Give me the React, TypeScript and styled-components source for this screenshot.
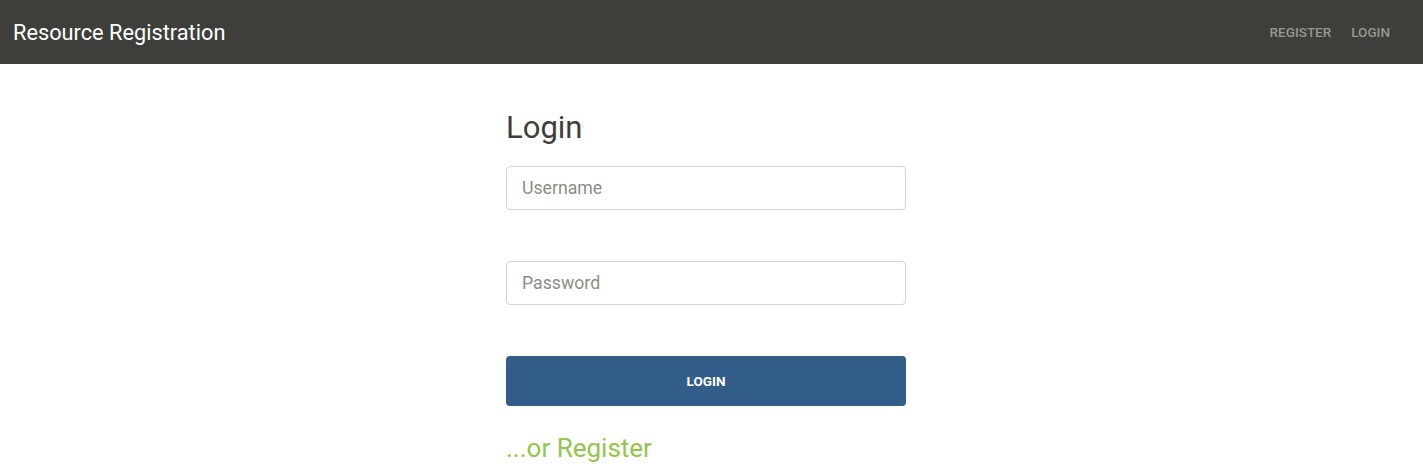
import styled, { createGlobalStyle } from 'styled-components'

const GlobalStyle = createGlobalStyle`
  body {
    margin: 0;
    font-family: Roboto, "Helvetica Neue", Arial, sans-serif;
    background: #ffffff;
    color: #3e3f3a;
  }
  * {
    box-sizing: border-box;
  }
`

const Navbar = styled.header`
  height: 64px;
  background-color: #3e3f3a;
  display: flex;
  align-items: center;
  justify-content: space-between;
  padding: 0 33px 0 13px;
`
const Brand = styled.span`
  color: #ffffff;
  font-size: 21.75px;
  font-weight: 400;
`
const NavLinks = styled.nav`
  display: flex;
  gap: 20px;
`
const NavLink = styled.a`
  color: #98978b;
  font-size: 13.5px;
  font-weight: 500;
  text-transform: uppercase;
  text-decoration: none;
  cursor: pointer;
`
const Main = styled.main`
  display: flex;
  justify-content: center;
  padding: 46px 11px 0 0;
`
const Form = styled.form`
  width: 400px;
  display: flex;
  flex-direction: column;
`
const Title = styled.h1`
  margin: 0 0 20px;
  font-size: 31px;
  font-weight: 400;
  line-height: 36px;
  color: #3e3f3a;
`
const Input = styled.input`
  height: 44px;
  width: 100%;
  border: 1px solid #ced4da;
  border-radius: 4px;
  padding: 0 15px;
  font-family: inherit;
  font-size: 17.7px;
  color: #3e3f3a;
  margin-bottom: 51px;
  outline: none;
  &::placeholder {
    color: #8e8c84;
  }
`
const SubmitBtn = styled.button`
  height: 50px;
  width: 100%;
  border: 0;
  border-radius: 4px;
  background-color: #325d88;
  color: #ffffff;
  font-family: inherit;
  font-size: 13.5px;
  font-weight: 700;
  text-transform: uppercase;
  cursor: pointer;
`
const RegisterLink = styled.a`
  margin-top: 26px;
  color: #93c54b;
  font-size: 26px;
  line-height: 32px;
  text-decoration: none;
  cursor: pointer;
`

export default function App() {
  return (
    <>
      <GlobalStyle />
      <Navbar>
        <Brand>Resource Registration</Brand>
        <NavLinks>
          <NavLink>Register</NavLink>
          <NavLink>Login</NavLink>
        </NavLinks>
      </Navbar>
      <Main>
        <Form onSubmit={(e) => e.preventDefault()}>
          <Title>Login</Title>
          <Input placeholder="Username" type="text" />
          <Input placeholder="Password" type="password" />
          <SubmitBtn type="submit">Login</SubmitBtn>
          <RegisterLink>...or Register</RegisterLink>
        </Form>
      </Main>
    </>
  )
}
